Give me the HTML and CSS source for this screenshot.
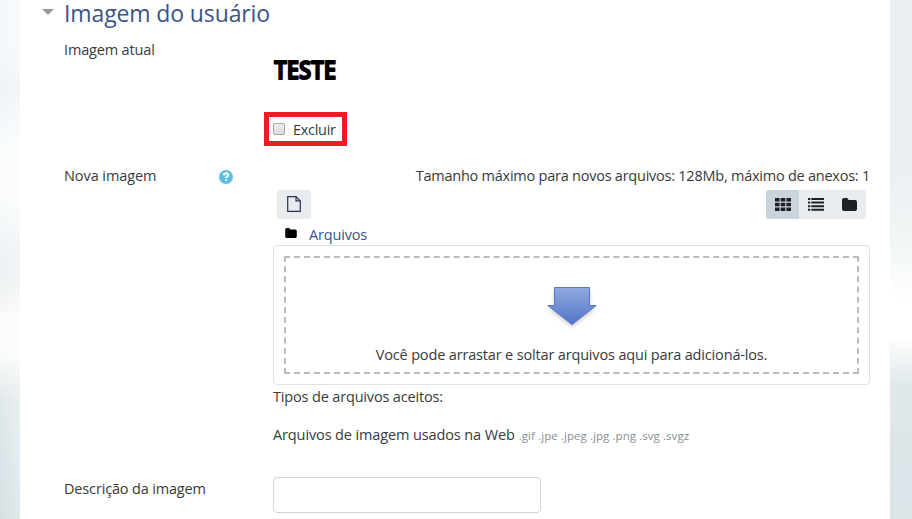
FILE: index.html
```html
<!DOCTYPE html>
<html lang="pt-BR">
<head>
<meta charset="utf-8">
<title>Imagem do usuário</title>
<link rel="stylesheet" href="styles.css">
</head>
<body>
<main class="page">
  <h3 class="legend"><svg class="caret" width="12" height="6" viewBox="0 0 12 6"><path d="M0 0h12L6 6z" fill="#999"/></svg><span class="legend-text">Imagem do usuário</span></h3>
  <div class="row current">
    <div class="label"><span class="t-atual">Imagem atual</span></div>
    <div class="field">
      <div class="picture"><svg width="70" height="40" viewBox="0 0 70 40"><text class="picture-text" x="1.200" y="26" textLength="62" lengthAdjust="spacingAndGlyphs">TESTE</text></svg></div>
      <label class="delete"><input type="checkbox" class="check"><span class="t-excluir">Excluir</span></label>
    </div>
  </div>
  <div class="row upload">
    <div class="label with-help"><span class="t-nova">Nova imagem</span>
      <svg class="help" width="14" height="14" viewBox="0 0 14 14"><circle cx="7" cy="7" r="7" fill="#5bc0de"/><path d="M4.700 5.200C5 3.700 6 3.300 7 3.300c1.300 0 2.200.7 2.200 1.800 0 1.500-2.100 1.500-2.100 3" fill="none" stroke="#fff" stroke-width="2"/><path d="M6.100 9.300h1.900v1.800H6.100z" fill="#fff"/></svg>
    </div>
    <div class="field">
      <div class="limits"><span class="t-limits">Tamanho máximo para novos arquivos: 128Mb, máximo de anexos: 1</span></div>
      <div class="toolbar">
        <button class="btn add" aria-label="Adicionar"><svg width="14" height="16" viewBox="0 0 14 16"><path d="M.7.6H9l4.300 4.300v10.500H.7zM9 .6v4.300h4.300" fill="none" stroke="#263057" stroke-width="1.200"/></svg></button>
        <div class="views">
          <button class="btn active" aria-label="Ícones"><svg width="16" height="13" viewBox="0 0 16 13" fill="#1d2125"><path d="M0 0h4.600v3.500H0zM5.700 0h4.600v3.500H5.700zM11.400 0H16v3.500h-4.600zM0 4.700h4.600v3.500H0zM5.700 4.700h4.600v3.500H5.700zM11.400 4.700H16v3.500h-4.600zM0 9.400h4.600v3.500H0zM5.700 9.400h4.600v3.500H5.700zM11.400 9.400H16v3.500h-4.600z"/></svg></button>
          <button class="btn" aria-label="Lista"><svg width="16" height="13" viewBox="0 0 16 13" fill="#1d2125"><path d="M0 0h2.300v2H0zM3.300 0H16v2H3.300zM0 3.600h2.300v2H0zM3.300 3.600H16v2H3.300zM0 7.200h2.300v2H0zM3.300 7.200H16v2H3.300zM0 10.800h2.300v2H0zM3.300 10.800H16v2H3.300z"/></svg></button>
          <button class="btn" aria-label="Pastas"><svg width="15" height="13" viewBox="0 0 15 13" fill="#1d2125"><path d="M0 2Q0 0 2 0h2.500Q6.300 0 6.500 2H13q2 0 2 2v7q0 2-2 2H2q-2 0-2-2z"/></svg></button>
        </div>
      </div>
      <div class="path"><svg width="12" height="10" viewBox="0 0 15 13"><path d="M0 2Q0 0 2 0h2.500Q6.300 0 6.500 2H13q2 0 2 2v7q0 2-2 2H2q-2 0-2-2z"/></svg><a class="t-arquivos">Arquivos</a></div>
      <div class="filebox"><div class="drop">
        <svg class="arrow" width="60" height="50" viewBox="0 0 60 50"><defs><linearGradient id="blue" x1="0" y1="0" x2="0" y2="1"><stop offset="0" stop-color="#91a9df"/><stop offset="1" stop-color="#5376c9"/></linearGradient><filter id="soft" x="-20%" y="-20%" width="140%" height="150%"><feGaussianBlur stdDeviation="2.200"/></filter></defs><path d="M12.500 7h35v18h7L30 44 5.500 25h7z" fill="#555" opacity=".3" filter="url(#soft)"/><path d="M12.500 4.500h35v18h6.800L30 41.500 5.700 22.500h6.800z" fill="url(#blue)" stroke="#5577cc"/></svg>
        <span class="t-drop">Você pode arrastar e soltar arquivos aqui para adicioná-los.</span>
      </div></div>
      <div class="types"><span class="t-tipos">Tipos de arquivos aceitos:</span></div>
      <div class="formats"><span class="t-web">Arquivos de imagem usados na Web</span><small class="t-ext">.gif .jpe .jpeg .jpg .png .svg .svgz</small></div>
    </div>
  </div>
  <div class="row description">
    <label class="label" for="desc"><span class="t-desc">Descrição da imagem</span></label>
    <div class="field"><input id="desc" class="text" type="text"></div>
  </div>
</main>
</body>
</html>
```
FILE: styles.css
```css
* { box-sizing: border-box; }
body {
  margin: 0;
  height: 519px;
  overflow: hidden;
  display: grid;
  grid-template-columns: 20px 870px 22px;
  font: 14.500px/22px "Open Sans", "Noto Sans", sans-serif;
  letter-spacing: -.16px;
  color: #373a3c;
}
body::before, body::after { content: ""; }
body::before { background: linear-gradient(90deg, rgba(255,255,255,0), rgba(255,255,255,.3)), linear-gradient(#f3f8fa 0, #f3f8fa 50px, #eef3f6 90px, #fafcfd 155px, #fafcfc 195px, #ecf1f4 260px, #eff2f3 287px, #fbfcfb 320px, #fafbfa 355px, #e1e8eb 400px, #dae3e8 465px, #d6dfe2 519px); }
body::after { background: linear-gradient(#e8eef1 0, #e9eff2 140px, #edf2f4 200px, #f0f5f5 235px, #fff 300px, #fff 335px, #e0e8eb 385px, #dbe4e8 480px, #dce6e9 519px); }
.page { background: #fff; height: 519px; }
.legend { margin: 0; height: 39px; display: flex; padding-left: 22px; font-weight: 400; font-size: 23px; line-height: 27px; letter-spacing: -.12px; color: #3b5388; }
.caret { margin: 9px 10px 0 0; }
.row { display: grid; grid-template-columns: 209px 597px; margin-left: 44px; }
.label { display: flex; align-items: flex-start; }
.picture { height: 64px; padding-top: 14px; }
.picture svg { display: block; }
.picture-text { font: 600 25px "Open Sans", sans-serif; letter-spacing: 0; stroke: #000; stroke-width: 2px; stroke-linejoin: round; }
.delete { display: flex; align-items: center; width: 83px; height: 34px; margin: 9px 0 0 -9px; padding-left: 4px; border: 5px solid #ed1c24; }
.check { appearance: none; width: 12px; height: 12px; margin: 0 8px 0 0; border: 1px solid #a5a5a5; border-radius: 2px; background: linear-gradient(#eee, #dcdcdc); }
.t-excluir { padding-top: 2px; letter-spacing: -.3px; }
.upload { margin-top: 19px; }
.help { margin: 5px 0 0 62px; }
.with-help { justify-content: space-between; padding-right: 40px; }
.t-nova { letter-spacing: -.08px; }
.limits { text-align: right; height: 25px; letter-spacing: -.24px; }
.toolbar { display: flex; justify-content: space-between; padding: 0 4px; }
.btn { width: 34px; height: 29px; border: 0; padding: 0 0 1px; display: flex; align-items: center; justify-content: center; background: #e9ecef; }
.add { border-radius: 3px; }
.views { display: flex; border-radius: 3px; overflow: hidden; }
.views .btn { width: 33px; }
.views .active { background: #cbd3da; }
.views .btn:last-child { width: 34px; }
.path { display: flex; height: 26px; padding: 5px 0 0 12px; gap: 12px; color: #3b5388; }
.path svg { margin-top: 4px; }
.filebox { height: 140px; padding: 10px; border: 1px solid #dee2e6; border-radius: 4px; }
.drop { height: 118px; border: 2px dashed #bbb; display: flex; flex-direction: column; align-items: center; padding-top: 25px; }
.arrow { display: block; margin-bottom: 11px; }
.types { height: 39px; padding-top: 1px; }
.formats { display: flex; gap: 4px; height: 22px; white-space: nowrap; }
.t-web { letter-spacing: -.12px; }
small { font-size: 11.500px; line-height: 24px; letter-spacing: .07px; color: #868e96; }
.description { margin-top: 31px; }
.description .label { padding-top: 1px; }
.text { display: block; width: 268px; height: 36px; border: 1px solid #ced4da; border-radius: 4px; }
.label, .limits, .drop { white-space: nowrap; }
```
